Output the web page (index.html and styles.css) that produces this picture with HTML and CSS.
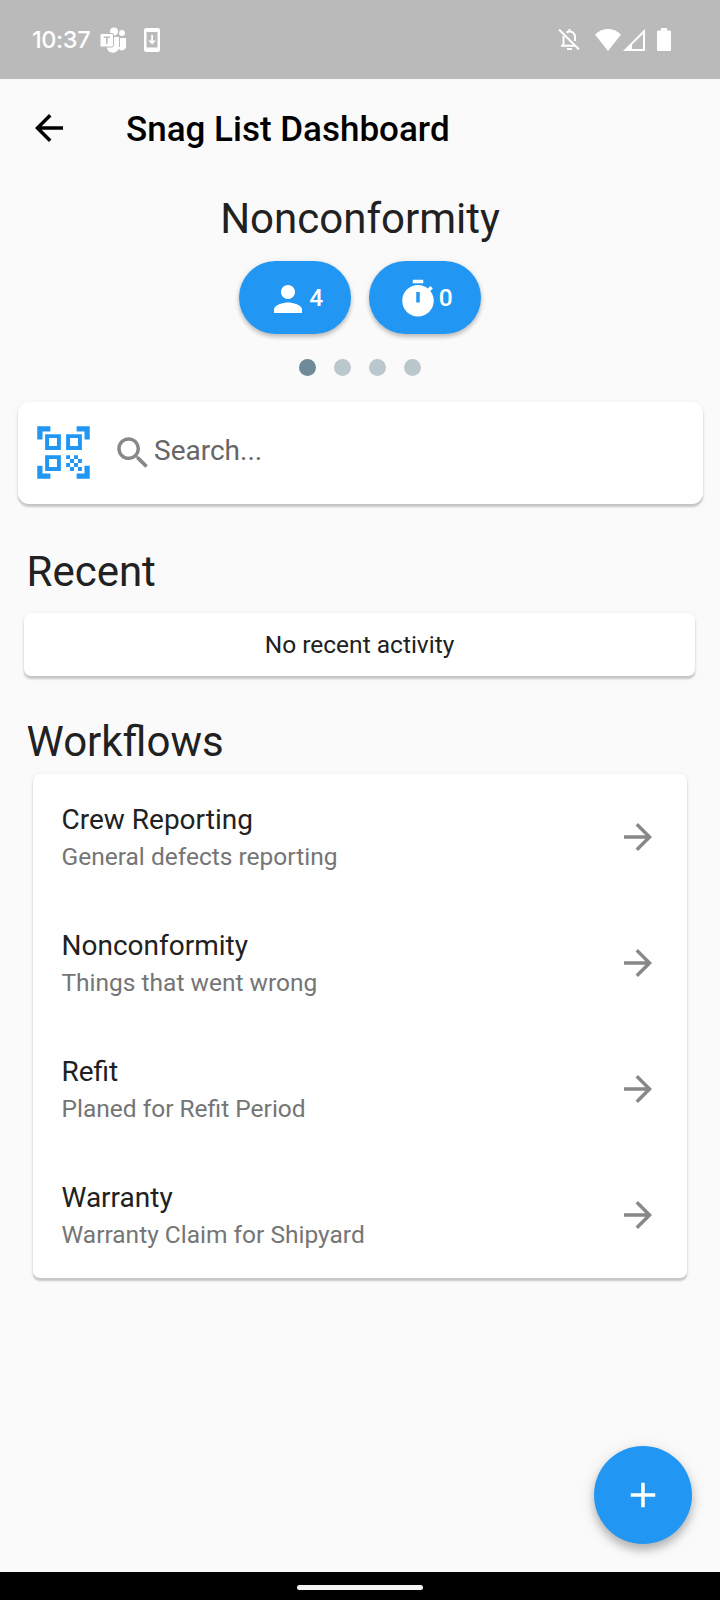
FILE: index.html
```html
<!DOCTYPE html>
<html lang="en">
<head>
    <meta charset="UTF-8">
    <meta name="viewport" content="width=device-width, initial-scale=1.0">
    <title>Snag List Dashboard</title>
    <link rel="stylesheet" href="styles.css">
</head>
<body>

<div class="status-bar">
    <span class="clock">10:37</span>
    <svg class="teams" width="28" height="28" viewBox="0 0 28 28">
        <circle cx="14" cy="5.500" r="4"/>
        <circle cx="22" cy="7" r="3"/>
        <path d="M18 12h8v6.500a4 4 0 0 1-8 3z"/>
        <path d="M7 11h12v8.500a6.200 6.200 0 0 1-12 3z"/>
        <rect x="0" y="7.500" width="13.500" height="13.500" rx="1.500" stroke="#bababa" stroke-width="1"/>
        <path d="M19.500 12v9" stroke="#bababa" stroke-width="1"/>
        <path d="M3.700 11.300h6.200M6.800 11.300v6.500" stroke="#bababa" stroke-width="1.600"/>
    </svg>
    <svg class="phone" width="16" height="24" viewBox="0 0 16 24">
        <path fill-rule="evenodd" d="M2 0h12a2 2 0 0 1 2 2v20a2 2 0 0 1-2 2H2a2 2 0 0 1-2-2V2a2 2 0 0 1 2-2zM2.500 4v15.500h11V4z"/>
        <path d="M7.200 7h1.800v5.500h3L8.100 16.500 4.200 12.500h3z"/>
    </svg>
    <div class="status-right">
        <svg class="bell" width="22" height="23" viewBox="0 0 22 23" fill="none" stroke="#fff" stroke-width="2">
            <path d="M1 1.500l20 20"/>
            <path d="M5.500 8v9.500M3 17.800h14M8.500 4.500c5-2.500 8.500.8 8.500 4.500v4M11.500 1v3M9 21h5"/>
        </svg>
        <svg class="wifi" width="26" height="22" viewBox="0 0 26 22">
            <path d="M0 5.500Q13-5.300 26 5.500L13 22z"/>
        </svg>
        <svg class="signal" width="22" height="22" viewBox="0 0 22 22">
            <path fill-rule="evenodd" d="M22 0v22H0zM20 4.800L9 15.800V20h11z"/>
        </svg>
        <svg class="battery" width="14" height="23" viewBox="0 0 14 23">
            <path d="M4 0h6v2.500h2.800A1.200 1.200 0 0 1 14 3.700v18.100a1.200 1.200 0 0 1-1.200 1.200H1.200A1.200 1.200 0 0 1 0 21.800V3.700a1.200 1.200 0 0 1 1.200-1.200H4z"/>
        </svg>
    </div>
</div>

<header class="app-bar">
    <svg class="icon" viewBox="0 0 24 24"><path d="M20 11H7.830l5.590-5.590L12 4l-8 8 8 8 1.410-1.410L7.830 13H20v-2z"/></svg>
    <h1>Snag List Dashboard</h1>
</header>

<main>
    <section class="summary">
        <h2>Nonconformity</h2>
        <div class="chips">
            <button class="chip">
                <svg class="icon" viewBox="0 0 24 24"><path d="M12 12c2.210 0 4-1.790 4-4s-1.790-4-4-4-4 1.790-4 4 1.790 4 4 4zm0 2c-2.670 0-8 1.340-8 4v2h16v-2c0-2.660-5.330-4-8-4z"/></svg>
                <span>4</span>
            </button>
            <button class="chip">
                <svg class="icon" viewBox="0 0 24 24"><path d="M9 1h6v2H9zM19.030 7.390l1.420-1.420c-.43-.51-.9-.99-1.410-1.410l-1.420 1.420C16.070 4.740 14.120 4 12 4c-4.970 0-9 4.030-9 9s4.020 9 9 9 9-4.030 9-9c0-2.120-.74-4.070-1.970-5.610zM13 14h-2V8h2v6z"/></svg>
                <span>0</span>
            </button>
        </div>
        <div class="dots">
            <span class="dot active"></span>
            <span class="dot"></span>
            <span class="dot"></span>
            <span class="dot"></span>
        </div>
    </section>

    <div class="card search">
        <svg class="qr" viewBox="0 0 24 24"><path d="M9.500 6.500v3h-3v-3h3M11 5H5v6h6V5zM9.500 14.500v3h-3v-3h3M11 13H5v6h6v-6zM17.500 6.500v3h-3v-3h3M19 5h-6v6h6V5zM13 13h1.500v1.500H13zM14.500 14.500H16V16h-1.500zM16 13h1.500v1.500H16zM13 16h1.500v1.500H13zM14.500 17.500H16V19h-1.500zM16 16h1.500v1.500H16zM17.500 14.500H19V16h-1.500zM17.500 17.500H19V19h-1.500zM22 7h-2V4h-3V2h5v5zM22 22v-5h-2v3h-3v2h5zM2 22h5v-2H4v-3H2v5zM2 2v5h2V4h3V2H2z"/></svg>
        <svg class="icon" viewBox="0 0 24 24"><path d="M15.500 14h-.79l-.28-.27C15.410 12.590 16 11.110 16 9.500 16 5.910 13.090 3 9.500 3S3 5.910 3 9.500 5.910 16 9.500 16c1.610 0 3.090-.59 4.230-1.570l.27.28v.79l5 4.990L20.490 19l-4.990-5zm-6 0C7.010 14 5 11.990 5 9.500S7.010 5 9.500 5 14 7.010 14 9.500 11.990 14 9.500 14z"/></svg>
        <span>Search...</span>
    </div>

    <h2 class="recent-title">Recent</h2>
    <div class="card recent">No recent activity</div>

    <h2 class="workflows-title">Workflows</h2>
    <div class="card workflows">
        <div class="row">
            <div>
                <h3>Crew Reporting</h3>
                <p>General defects reporting</p>
            </div>
            <svg class="icon" viewBox="0 0 24 24"><path d="M12 4l-1.410 1.410L16.170 11H4v2h12.170l-5.580 5.590L12 20l8-8z"/></svg>
        </div>
        <div class="row">
            <div>
                <h3>Nonconformity</h3>
                <p>Things that went wrong</p>
            </div>
            <svg class="icon" viewBox="0 0 24 24"><path d="M12 4l-1.410 1.410L16.170 11H4v2h12.170l-5.580 5.590L12 20l8-8z"/></svg>
        </div>
        <div class="row">
            <div>
                <h3>Refit</h3>
                <p>Planed for Refit Period</p>
            </div>
            <svg class="icon" viewBox="0 0 24 24"><path d="M12 4l-1.410 1.410L16.170 11H4v2h12.170l-5.580 5.590L12 20l8-8z"/></svg>
        </div>
        <div class="row">
            <div>
                <h3>Warranty</h3>
                <p>Warranty Claim for Shipyard</p>
            </div>
            <svg class="icon" viewBox="0 0 24 24"><path d="M12 4l-1.410 1.410L16.170 11H4v2h12.170l-5.580 5.590L12 20l8-8z"/></svg>
        </div>
    </div>
</main>

<button class="fab">
    <svg class="icon" viewBox="0 0 24 24"><path d="M19 13h-6v6h-2v-6H5v-2h6V5h2v6h6v2z"/></svg>
</button>

<div class="nav-bar"><div class="pill"></div></div>

</body>
</html>
```
FILE: styles.css
```css
* {
    box-sizing: border-box;
    margin: 0;
    padding: 0;
}
body {
    position: relative;
    display: flex;
    flex-direction: column;
    height: 1600px;
    background: #fafafa;
    font-family: Roboto, "Liberation Sans", sans-serif;
    color: #212121;
    overflow: hidden;
}
svg {
    display: block;
    flex: none;
    fill: currentColor;
}
button {
    border: none;
    font-family: inherit;
    cursor: pointer;
}
.icon {
    width: 42px;
    height: 42px;
}

/* status bar */
.status-bar {
    display: flex;
    align-items: center;
    height: 79px;
    padding: 0 49px 0 32px;
    background: #bababa;
    color: #fff;
}
.clock {
    width: 68px;
    font-family: Inter, Roboto, sans-serif;
    font-size: 23.5px;
    font-weight: 500;
    letter-spacing: -0.4px;
}
.teams {
    overflow: visible;
}
.teams path, .teams circle {
    fill: #fff;
}
.phone {
    margin-left: 16px;
}
.status-right {
    display: flex;
    align-items: center;
    margin-left: auto;
}
.status-right .bell {
    fill: none;
    margin-right: 15px;
}
.signal {
    margin: 0 12px 0 2px;
}

/* app bar */
.app-bar {
    display: flex;
    align-items: center;
    height: 98px;
    padding-left: 28px;
    color: #000;
}
.app-bar h1 {
    margin: 2px 0 0 56px;
    font-size: 35px;
    font-weight: 500;
    line-height: 41px;
}

main {
    display: flex;
    flex-direction: column;
    flex: 1;
}
h2 {
    font-size: 42px;
    font-weight: 400;
    line-height: 49px;
}
.summary {
    display: flex;
    flex-direction: column;
    align-items: center;
    padding-top: 17px;
}
.chips {
    display: flex;
    gap: 17.5px;
    margin-top: 17.5px;
}
.chip {
    display: flex;
    align-items: center;
    width: 112px;
    height: 73.5px;
    padding-left: 28px;
    border-radius: 37px;
    background: #2196f3;
    color: #fff;
    font-size: 24.5px;
    font-weight: 500;
    box-shadow: 0 3px 4px rgba(0, 0, 0, 0.2), 0 1px 6px rgba(0, 0, 0, 0.1);
}
.chip .icon {
    margin-top: 3px;
}
.dots {
    display: flex;
    gap: 17.5px;
    margin-top: 24.5px;
}
.dot {
    width: 17.5px;
    height: 17.5px;
    border-radius: 50%;
    background: #bac8cd;
}
.dot.active {
    background: #6f8b97;
}

/* cards */
.card {
    background: #fff;
    border-radius: 7px;
    box-shadow: 0 3px 2px rgba(0, 0, 0, 0.18), 0 1px 5px rgba(0, 0, 0, 0.08);
}
.search {
    display: flex;
    align-items: center;
    height: 102.5px;
    margin: 25.5px 17.5px 0;
    padding-left: 14px;
    border-radius: 11px;
    font-size: 28px;
    color: #666;
}
.search .qr {
    width: 63px;
    height: 63px;
    color: #2196f3;
}
.search .icon {
    margin-left: 17px;
    color: #888;
}
.search span {
    margin: -5px 0 0 0.5px;
}
.recent-title {
    margin: 43px 0 0 26.5px;
}
.recent {
    margin: 16.5px 25px 0 24px;
    font-size: 24.5px;
    line-height: 63px;
    text-align: center;
}
.workflows-title {
    margin: 41.5px 0 0 26.5px;
}
.workflows {
    margin: 7.5px 33px 0;
}
.row {
    display: flex;
    justify-content: space-between;
    align-items: center;
    height: 126px;
    padding: 0 28px 0 28.5px;
}
.row div {
    padding-top: 4.5px;
}
.row h3 {
    font-size: 28px;
    font-weight: 400;
    line-height: 36px;
}
.row p {
    font-size: 24.5px;
    line-height: 37px;
    color: #757575;
}
.row .icon {
    color: #888;
}

.fab {
    position: absolute;
    right: 28px;
    bottom: 56px;
    display: flex;
    align-items: center;
    justify-content: center;
    width: 98px;
    height: 98px;
    border-radius: 50%;
    background: #2196f3;
    color: #fff;
    box-shadow: 0 6px 9px rgba(0, 0, 0, 0.22), 0 3px 16px rgba(0, 0, 0, 0.12);
}

.nav-bar {
    display: flex;
    justify-content: center;
    height: 28px;
    padding-top: 12.5px;
    background: #000;
}
.pill {
    width: 126px;
    height: 5px;
    border-radius: 3px;
    background: #f4f4f4;
}
```
